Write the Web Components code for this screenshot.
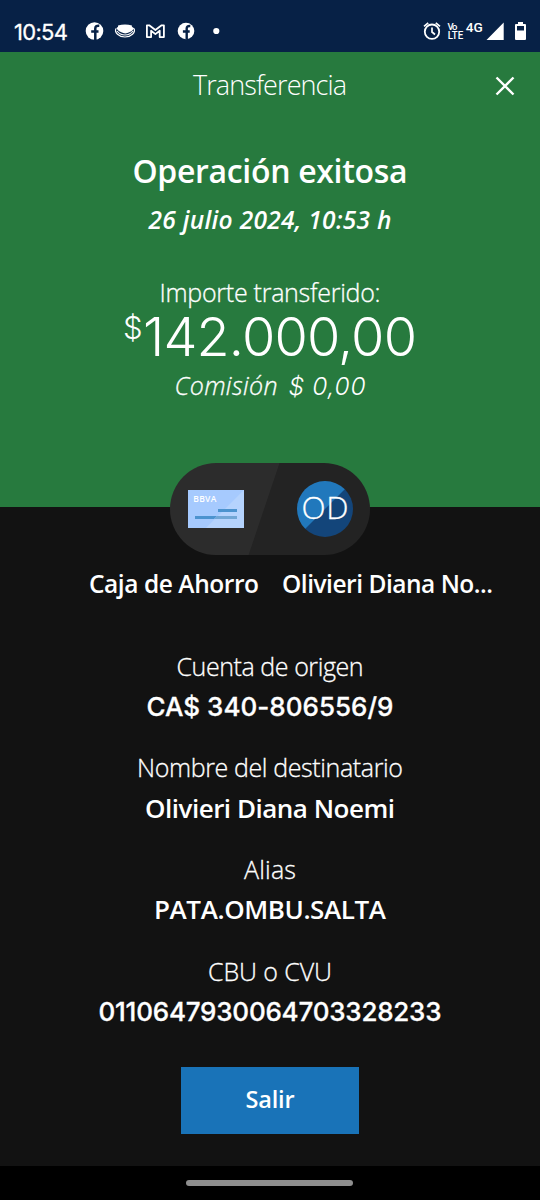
<!DOCTYPE html>
<html lang="es">
<head>
<meta charset="utf-8">
<title>Transferencia</title>
<style>
html,body{margin:0;background:#000}
body{width:540px;height:1200px;overflow:hidden}
</style>
</head>
<body>
<transfer-app></transfer-app>
<script>
const define=(name,html,ready)=>customElements.define(name,class extends HTMLElement{
  constructor(){super();const t=document.createElement('template');t.innerHTML=html;
    this.attachShadow({mode:'open'}).append(t.content.cloneNode(true));}
  connectedCallback(){if(ready)ready.call(this);}
});

/* One line of text, tracked so that it fills the width in data-w. */
define('tracked-text',`<style>
:host{display:block;white-space:pre;flex:none;-webkit-text-stroke:.3px currentColor}
:host([data-weight="600"]),:host([plain]){-webkit-text-stroke:0}
:host([face=inter]){font-family:Inter,"Open Sans",sans-serif}
span{display:inline-block}
</style><span><slot></slot></span>`,function(){
  const d=this.dataset,s=this.shadowRoot.querySelector('span');
  this.style.fontSize=d.size+'px';
  this.style.lineHeight=this.style.height=(d.h||32)+'px';
  if(d.weight)this.style.fontWeight=d.weight;
  this.style.width=d.w+'px';
  const n=this.textContent.length;
  if(n>1)this.style.letterSpacing=((+d.w-s.getBoundingClientRect().width)/(n-1))+'px';
});

define('status-bar',`<style>
:host{display:flex;box-sizing:border-box;height:52px;background:#072146;padding:9px 12px 0 14px;align-items:flex-start;color:#fff;font-family:Inter,sans-serif}
svg{display:block;flex:none;margin-top:3px}
</style>
<tracked-text face="inter" data-size="22" data-h="32" data-w="54" data-weight="400" style="margin-top:7px">10:54</tracked-text>
<svg width="166" height="38" viewBox="68 12 166 38" fill="none" stroke="#fff">
 <circle cx="94.500" cy="31" r="8.800" fill="#fff" stroke="none"/><path d="M95.300 40v-11.500c0-2.200 1-3 4-2.800M91.200 31.500h7.300" stroke="#072146" stroke-width="2.500"/>
 <path d="M118 25.600q7-2 14 0q-1 1.400 2.300 2.600q-2 3-5 4.100q-4 2.200-8 0q-3-1.200-5-4.100q2.700-1.300 1.700-2.600z" fill="#fff" stroke="none"/>
 <path d="M116 28.500c-2 4 3 8.500 9 8.500s11-4.500 9-8.500M117 31q3 4 8 4t8-4" stroke-width="1.200"/>
 <path d="M146.900 37.100V25.300h2.300l6.200 4.700 6.200-4.700h2.300v11.800h-4.200v-6.400l-4.300 3.400-4.300-3.400v6.400z" stroke-width="1.800" stroke-linejoin="round"/>
 <circle cx="186" cy="31" r="8.300" fill="#fff" stroke="none"/><path d="M186.700 39.500v-11c0-2 1-2.700 3.600-2.500M182.900 31.500h6.800" stroke="#072146" stroke-width="2.400"/>
 <circle cx="216.300" cy="31" r="3.100" fill="#fff" stroke="none"/>
</svg>
<svg style="margin-left:auto" width="106" height="38" viewBox="422 12 106 38" fill="none" stroke="#fff">
 <circle cx="432" cy="31.700" r="7.200" stroke-width="1.800"/><path d="M432 27.500v4.500l3 2.500M424 26.300l4.200-3.400M440 26.300l-4.200-3.400" stroke-width="1.700"/>
 <g fill="#fff" stroke="none" font-family="Roboto" font-weight="500"><text x="447.500" y="29.700" font-size="9.500" textLength="10">Vo</text><text x="447.800" y="39" font-size="10" textLength="15.500" lengthAdjust="spacingAndGlyphs">LTE</text><text x="465.700" y="32" font-size="13.500" textLength="17" lengthAdjust="spacingAndGlyphs">4G</text>
 <path d="M486.500 40L503.700 22.500V40zM518 22h5v2h2q1 0 1 1v14q0 1-1 1h-9q-1 0-1-1V25q0-1 1-1h2z"/><path d="M517 26h7v4.500h-7z" fill="#072146"/></g>
</svg>`);

define('success-header',`<style>
:host{display:block;height:455px;background:#277a3e;color:#fff}
.bar{display:grid;grid-template-columns:1fr 154px 1fr;height:66px;padding-top:16px;box-sizing:border-box}
.bar svg{justify-self:end;margin:8px 25px 0 0}
.stack{display:flex;flex-direction:column;align-items:center}
.sum{display:flex;align-items:flex-start}
.fee{display:flex;align-items:baseline;gap:11px;margin-top:3px;font-style:italic}
i{font-style:normal}
</style>
<div class="bar"><i></i><tracked-text plain data-size="27" data-w="154" data-h="33">Transferencia</tracked-text>
<svg width="20" height="20" viewBox="0 0 20 20"><path d="M1.500 1.500l17 17M18.500 1.500l-17 17" stroke="#fff" stroke-width="2.400"/></svg></div>
<div class="stack">
 <tracked-text data-size="32" data-h="44" data-w="275" data-weight="600" style="margin-top:31px">Operación exitosa</tracked-text>
 <tracked-text data-size="24.500" data-w="243" data-weight="600" style="margin-top:11px;font-style:italic">26 julio 2024, 10:53 h</tracked-text>
 <tracked-text data-size="25" data-w="221" style="margin-top:40px">Importe transferido:</tracked-text>
 <div class="sum"><tracked-text plain face="inter" data-size="31" data-h="40" data-w="20">$</tracked-text><tracked-text plain face="inter" data-size="54" data-h="58" data-w="274" data-weight="300">142.000,00</tracked-text></div>
 <div class="fee"><tracked-text data-size="25" data-w="103">Comisión</tracked-text><tracked-text plain face="inter" data-size="24.500" data-w="77">$ 0,00</tracked-text></div>
</div>`);

define('party-pill',`<style>
:host{display:flex;box-sizing:border-box;position:relative;width:200px;height:92px;border-radius:46px;margin:-44px auto 0;padding:0 17px 0 18px;align-items:center;justify-content:space-between;background:linear-gradient(108.600deg,#2c2c2c 47.200%,#232323 47.600%)}
.circle{width:56px;height:56px;border-radius:50%;background:linear-gradient(135deg,#2178bc 49.500%,#13457a 50.500%);display:flex;justify-content:center;align-items:center;color:#fff}
svg{display:block}
</style>
<svg width="56" height="38" viewBox="0 0 56 38"><path d="M0 0h56v38H0z" fill="#a6cafe"/><path d="M56 0v38H18z" fill="#b5d3fd"/>
<text x="5.300" y="11.500" font-family="Open Sans" font-size="8.500" font-weight="600" fill="#fff" textLength="23">BBVA</text>
<path d="M30 19h19v3H30zM7 26h22l-3 3H7z" fill="#4c93cf"/><path d="M29 26h20v3H26z" fill="#71a6d5"/></svg>
<div class="circle"><tracked-text data-size="31.500" data-h="40" data-w="47" style="margin-top:-5px">OD</tracked-text></div>`);

define('detail-item',`<style>
:host{display:flex;flex-direction:column;align-items:center;gap:9px;height:101.700px;color:#fff}
</style><slot name="label"></slot><slot></slot>`);

define('transfer-details',`<style>
:host{display:block;height:659px;background:#121212;color:#fff}
.names{display:flex;gap:23px;padding:13px 0 0 89px;height:51px;font-weight:600}
.list{padding-top:30.500px}
button{display:flex;margin:11px auto 0;width:178px;height:67px;border:0;padding:0;background:#1973b8;color:#fff;font:inherit;align-items:center;justify-content:center}
</style>
<party-pill></party-pill>
<div class="names"><tracked-text plain data-size="24.500" data-w="170">Caja de Ahorro</tracked-text><tracked-text plain data-size="24.500" data-w="211">Olivieri Diana No...</tracked-text></div>
<div class="list">
<detail-item><tracked-text slot="label" data-size="25" data-w="187">Cuenta de origen</tracked-text><tracked-text face="inter" data-size="26" data-w="247" data-weight="550">CA$ 340-806556/9</tracked-text></detail-item>
<detail-item><tracked-text slot="label" data-size="25" data-w="266">Nombre del destinatario</tracked-text><tracked-text data-size="26" data-w="250" data-weight="600">Olivieri Diana Noemi</tracked-text></detail-item>
<detail-item><tracked-text slot="label" data-size="25" data-w="52">Alias</tracked-text><tracked-text data-size="26" data-w="232" data-weight="600" style="margin-top:-1px">PATA.OMBU.SALTA</tracked-text></detail-item>
<detail-item><tracked-text slot="label" data-size="25" data-w="124">CBU o CVU</tracked-text><tracked-text face="inter" data-size="26" data-w="343" data-weight="550">0110647930064703328233</tracked-text></detail-item>
</div>
<button><tracked-text data-size="23.500" data-w="49" data-weight="600" style="margin-top:-3px">Salir</tracked-text></button>`);

define('home-bar',`<style>
:host{display:flex;height:34px;background:#000;justify-content:center}
i{width:167px;height:6px;border-radius:3px;background:#8e8e8e;margin:14px 1px 0 0}
</style><i></i>`);

define('transfer-app',`<style>
:host{display:flow-root;width:540px;height:1200px;overflow:hidden;font-family:"Open Sans","Noto Sans",sans-serif;font-weight:340}
transfer-details{display:flow-root;overflow:visible}
</style><status-bar></status-bar><success-header></success-header><transfer-details></transfer-details><home-bar></home-bar>`);
</script>
</body>
</html>
